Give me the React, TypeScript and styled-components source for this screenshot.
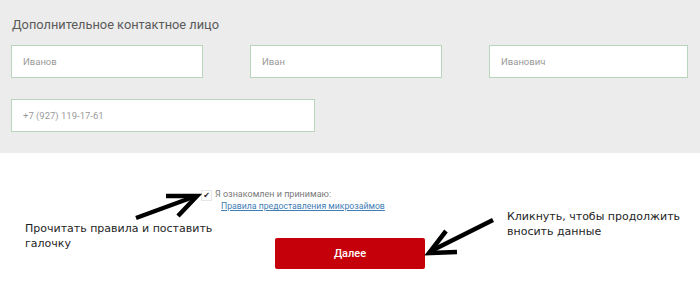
import React from 'react'
import styled, { createGlobalStyle } from 'styled-components'

const GlobalStyle = createGlobalStyle`
    html, body {
        margin: 0;
        padding: 0;
        background: #ffffff;
    }
    body {
        width: 700px;
        height: 293px;
        overflow: hidden;
        font-family: Roboto, "Noto Sans", sans-serif;
    }
`

const ContactSection = styled.section`
    background: #ececec;
    height: 153px;
    box-sizing: border-box;
    padding: 15px 12px 0 11px;
`

const Title = styled.h2`
    margin: 0 0 10px 1px;
    font-size: 12.8px;
    font-weight: 400;
    line-height: 20px;
    color: #5a5a5a;
`

const InputRow = styled.div`
    display: grid;
    grid-template-columns: ${p => p.$columns};
    column-gap: 47px;
    margin-bottom: ${p => p.$gap || 0}px;
`

const Field = styled.input`
    box-sizing: border-box;
    width: 100%;
    height: 33px;
    padding: 0 11px;
    border: 1px solid #b9d6bd;
    background: #ffffff;
    font-family: Roboto, sans-serif;
    font-size: 9.5px;
    color: #8f8f8f;
    outline: none;
    &::placeholder {
        color: #9a9a9a;
    }
`

const ConsentArea = styled.section`
    position: relative;
    height: 140px;
    display: flex;
    flex-direction: column;
    align-items: flex-start;
    padding-top: 35px;
    box-sizing: border-box;
`

const Consent = styled.div`
    display: flex;
    align-items: flex-start;
    gap: 3px;
    margin-left: 201px;
`

const CheckBox = styled.span`
    width: 9px;
    height: 9px;
    margin-top: 2px;
    border: 1px solid #e6e6e6;
    background: #ffffff;
    display: flex;
    align-items: center;
    justify-content: center;
    font-family: "DejaVu Sans", sans-serif;
    font-size: 8px;
    line-height: 9px;
    color: #222;
`

const ConsentText = styled.div`
    display: flex;
    flex-direction: column;
    font-size: 9px;
    line-height: 12px;
    color: #7a7a7a;
`

const RulesLink = styled.a`
    margin-left: 6px;
    font-size: 8.7px;
    color: #3f7db5;
    text-decoration: underline;
    cursor: pointer;
`

const NextButton = styled.button`
    margin-top: 26px;
    margin-left: 275px;
    width: 150px;
    height: 31px;
    border: none;
    border-radius: 2px;
    background: #c6000b;
    color: #ffffff;
    font-family: Roboto, sans-serif;
    font-weight: 500;
    font-size: 11px;
    cursor: pointer;
`

const Note = styled.div`
    position: absolute;
    left: ${p => p.$x}px;
    top: ${p => p.$y}px;
    font-family: "DejaVu Sans", Verdana, sans-serif;
    font-size: 11px;
    line-height: 15px;
    color: #1e1e1e;
`

const ArrowLayer = styled.svg`
    position: absolute;
    left: 0;
    top: 0;
    width: 700px;
    height: 140px;
    pointer-events: none;
`

const Arrows = () => (
    <ArrowLayer viewBox="0 153 700 140">
        <g stroke="#000" strokeWidth="4.5" strokeLinecap="butt" fill="none">
            <line x1="136" y1="218" x2="196" y2="196" />
            <polyline points="166,196 197,196 178,216" strokeLinejoin="miter" />
            <line x1="493" y1="220" x2="431" y2="251" />
            <polyline points="446,231 429,253 457,252" strokeLinejoin="miter" />
        </g>
    </ArrowLayer>
)

export default function App() {
    return (
        <>
            <GlobalStyle />
            <ContactSection>
                <Title>Дополнительное контактное лицо</Title>
                <InputRow $columns="192px 192px 199px" $gap={21}>
                    <Field placeholder="Иванов" />
                    <Field placeholder="Иван" />
                    <Field placeholder="Иванович" />
                </InputRow>
                <InputRow $columns="304px">
                    <Field placeholder="+7 (927) 119-17-61" />
                </InputRow>
            </ContactSection>
            <ConsentArea>
                <Consent>
                    <CheckBox>✔</CheckBox>
                    <ConsentText>
                        <span>Я ознакомлен и принимаю:</span>
                        <RulesLink>Правила предоставления микрозаймов</RulesLink>
                    </ConsentText>
                </Consent>
                <NextButton>Далее</NextButton>
                <Note $x={25} $y={68}>
                    Прочитать правила и поставить<br />галочку
                </Note>
                <Note $x={507} $y={56}>
                    Кликнуть, чтобы продолжить<br />вносить данные
                </Note>
                <Arrows />
            </ConsentArea>
        </>
    )
}
